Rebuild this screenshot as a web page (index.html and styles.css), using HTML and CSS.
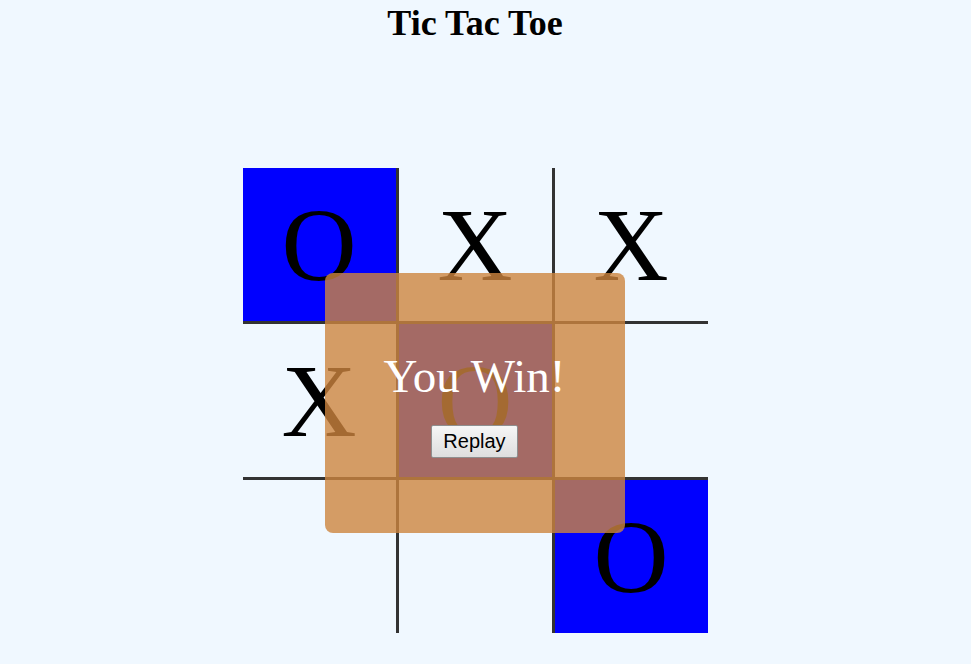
FILE: index.html
```html
<!DOCTYPE html>
<html lang="en">
<head>
<meta charset="utf-8">
<title>Tic Tac Toe</title>
<link rel="stylesheet" href="styles.css">
</head>
<body>
<main class="page">
  <h1 class="title">Tic Tac Toe</h1>
  <div class="board-wrap">
    <div class="board">
      <div class="cell win">O</div>
      <div class="cell">X</div>
      <div class="cell last-col">X</div>
      <div class="cell">X</div>
      <div class="cell win">O</div>
      <div class="cell last-col"></div>
      <div class="cell last-row"></div>
      <div class="cell last-row"></div>
      <div class="cell last-row last-col win">O</div>
    </div>
    <div class="overlay">
      <div class="message">You Win!</div>
      <button class="replay" type="button">Replay</button>
    </div>
  </div>
</main>
</body>
</html>
```
FILE: styles.css
```css
html, body {
  margin: 0;
  padding: 0;
  background: #f0f8ff;
}

body {
  font-family: "Liberation Serif", "Times New Roman", serif;
  color: #000;
}

.page {
  width: 950px;
  display: flex;
  flex-direction: column;
  align-items: center;
}

.title {
  margin: 3px 0 0;
  height: 41px;
  font-size: 36px;
  font-weight: bold;
  line-height: 41px;
}

.board-wrap {
  position: relative;
  margin-top: 124px;
}

.board {
  display: grid;
  grid-template-columns: auto auto auto;
}

.cell {
  width: 153px;
  height: 153px;
  border-right: 3px solid #333;
  border-bottom: 3px solid #333;
  display: flex;
  align-items: center;
  justify-content: center;
  font-size: 104px;
  line-height: normal;
}

.cell.last-col {
  border-right: none;
}

.cell.last-row {
  border-bottom: none;
}

.cell.win {
  background: #0000ff;
}

.overlay {
  position: absolute;
  left: 82px;
  top: 105px;
  width: 300px;
  height: 260px;
  border-radius: 8px;
  background: rgba(205, 133, 63, 0.8);
  display: flex;
  flex-direction: column;
  align-items: center;
  justify-content: center;
  gap: 22px;
}

.message {
  color: #fff;
  font-size: 47px;
  line-height: normal;
}

.replay {
  font-family: "Liberation Sans", Arial, sans-serif;
  font-size: 20px;
  line-height: normal;
  color: #000;
  padding: 4px 11px;
  border: 1px solid #8f8f8f;
  border-radius: 2px;
  background: linear-gradient(#f6f6f6, #dedede);
  margin: 0;
}
```
